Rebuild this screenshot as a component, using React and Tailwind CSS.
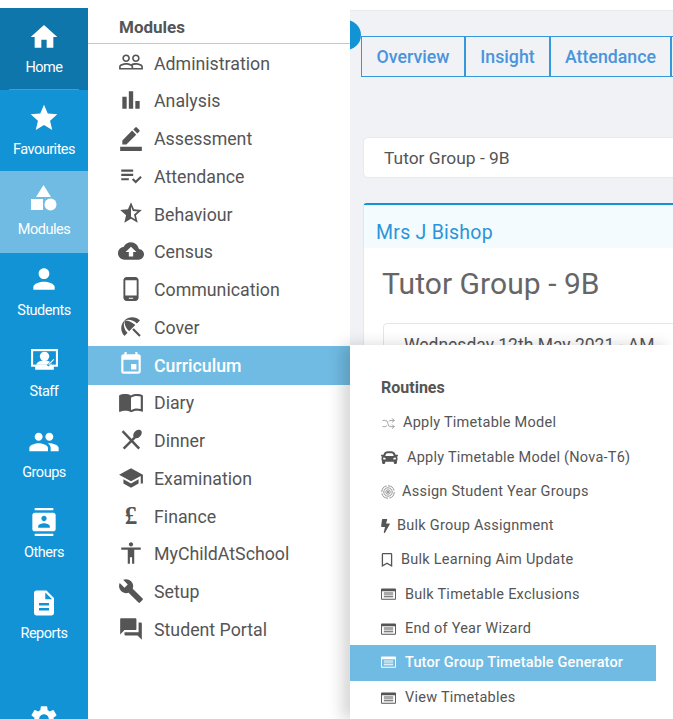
import React from "react";
import {
  MdHome, MdStar, MdPerson, MdPeople, MdContacts, MdDescription, MdSettings,
  MdPeopleOutline, MdBarChart, MdBorderColor, MdPlaylistAddCheck, MdOutlineStarHalf, MdCloudUpload,
  MdPhoneAndroid, MdBeachAccess, MdEvent, MdImportContacts, MdSchool, MdAccessibility,
  MdBuild, MdForum,
} from "react-icons/md";
import { FaCar, FaBolt, FaRegBookmark } from "react-icons/fa";
import { TbArrowsShuffle } from "react-icons/tb";

const font = { fontFamily: "Roboto, sans-serif" };

function ShapesIcon({ className }) {
  return (
    <svg viewBox="0 0 26 26" className={className} fill="currentColor">
      <path d="M12.5 0l7.5 12H5z" />
      <rect x="0" y="14" width="12" height="11" />
      <circle cx="19.5" cy="19.5" r="6" />
    </svg>
  );
}

function StaffIcon({ className }) {
  return (
    <svg viewBox="0 0 28 24" className={className} fill="none">
      <path d="M1 1h26v17h-4v3H5v-3H1z" fill="currentColor" />
      <rect x="3" y="3" width="22" height="13" fill="#1293d6" />
      <circle cx="14" cy="8" r="4.5" fill="currentColor" />
      <path d="M6 16c1-3 4-4 8-4s6 1 7 4z" fill="currentColor" />
      <path d="M17 17l6-6" stroke="#1293d6" strokeWidth="2" />
      <path d="M18 16l5-5" stroke="currentColor" strokeWidth="1" />
    </svg>
  );
}

function DinnerIcon({ className }) {
  return (
    <svg viewBox="0 0 24 24" className={className} fill="currentColor">
      <path d="M4.4 19.2L15 8.6l1.6 1.6L6 20.8z" />
      <ellipse cx="18" cy="6.4" rx="3.2" ry="4.6" transform="rotate(45 18 6.4)" />
      <path d="M3.4 4.6L5 3l15.4 16.2-1.7 1.6z" />
    </svg>
  );
}

function PoundIcon({ className }) {
  return (
    <span className={`${className} flex items-center justify-center font-bold text-[25px] leading-none`} style={{ fontFamily: '"Liberation Serif", serif' }}>
      £
    </span>
  );
}

function TableIcon({ className }) {
  return (
    <svg viewBox="0 0 16 12" className={className}>
      <path fillRule="evenodd" d="M1 0h14a1 1 0 0 1 1 1v10a1 1 0 0 1-1 1H1a1 1 0 0 1-1-1V1a1 1 0 0 1 1-1zM1 3v8h14V3z" fill="currentColor" />
      <path d="M3 4.4h10v1H3zM3 6.4h10v1H3zM3 8.4h10v1H3z" fill="currentColor" />
    </svg>
  );
}

function RadarIcon({ className }) {
  return (
    <svg viewBox="0 0 14 14" className={className} fill="none" stroke="currentColor" strokeWidth="0.9">
      <circle cx="7" cy="7" r="6.2" strokeDasharray="8 1.5" />
      <circle cx="7" cy="7" r="4.2" />
      <circle cx="7" cy="7" r="2.2" />
      <circle cx="7" cy="7" r="0.7" fill="currentColor" />
    </svg>
  );
}

function ShuffleIcon({ className }) {
  return <TbArrowsShuffle className={className} strokeWidth={1.2} />;
}

const rail = [
  { label: "Home", Icon: MdHome, cls: "w-[32px] h-[32px] mt-[13px]", bg: "bg-[#0f76ab]", h: "h-[82px]", gap: "mt-[6px]", rule: true },
  { label: "Favourites", Icon: MdStar, cls: "w-[32px] h-[32px] mt-[12px]", h: "h-[81px]", gap: "mt-[7px]" },
  { label: "Modules", Icon: ShapesIcon, cls: "w-[26px] h-[26px] mt-[14px]", bg: "bg-[#70bbe3]", h: "h-[82px]", gap: "mt-[10px]" },
  { label: "Students", Icon: MdPerson, cls: "w-[32px] h-[32px] mt-[10px]", h: "h-[81px]", gap: "mt-[7px]" },
  { label: "Staff", Icon: StaffIcon, cls: "w-[29px] h-[25px] mt-[14px]", h: "h-[81px]", gap: "mt-[10px]" },
  { label: "Groups", Icon: MdPeople, cls: "w-[32px] h-[32px] mt-[11px]", h: "h-[81px]", gap: "mt-[6px]" },
  { label: "Others", Icon: MdContacts, cls: "w-[28px] h-[30px] mt-[11px]", h: "h-[81px]", gap: "mt-[7px]" },
  { label: "Reports", Icon: MdDescription, cls: "w-[30px] h-[30px] mt-[11px]", h: "h-[81px]", gap: "mt-[7px]" },
];

const modules = [
  ["Administration", MdPeopleOutline],
  ["Analysis", MdBarChart],
  ["Assessment", MdBorderColor],
  ["Attendance", MdPlaylistAddCheck],
  ["Behaviour", MdOutlineStarHalf],
  ["Census", MdCloudUpload],
  ["Communication", MdPhoneAndroid],
  ["Cover", MdBeachAccess],
  ["Curriculum", MdEvent, true],
  ["Diary", MdImportContacts],
  ["Dinner", DinnerIcon],
  ["Examination", MdSchool],
  ["Finance", PoundIcon],
  ["MyChildAtSchool", MdAccessibility],
  ["Setup", MdBuild],
  ["Student Portal", MdForum],
];

const routines = [
  ["Apply Timetable Model", ShuffleIcon, "w-[15px] h-[15px] text-[#888]", "mr-[7px]"],
  ["Apply Timetable Model (Nova-T6)", FaCar, "w-[17px] h-[17px]", "mr-[9px]"],
  ["Assign Student Year Groups", RadarIcon, "w-[14px] h-[14px] text-[#888]", "mr-[7px]"],
  ["Bulk Group Assignment", FaBolt, "w-[9px] h-[14px]", "mr-[7px]"],
  ["Bulk Learning Aim Update", FaRegBookmark, "w-[12px] h-[14px]", "mr-[8px]"],
  ["Bulk Timetable Exclusions", TableIcon, "w-[15px] h-[12px]", "mr-[9px]"],
  ["End of Year Wizard", TableIcon, "w-[15px] h-[12px]", "mr-[9px]"],
  ["Tutor Group Timetable Generator", TableIcon, "w-[15px] h-[12px]", "mr-[9px]", true],
  ["View Timetables", TableIcon, "w-[15px] h-[12px]", "mr-[9px]"],
];

export default function App() {
  return (
    <div style={font} className="relative w-[673px] h-[719px] overflow-hidden bg-white flex">
      {/* icon rail */}
      <nav className="w-[88px] mt-[8px] bg-[#1293d6] text-white flex flex-col shrink-0 overflow-hidden">
        {rail.map(({ label, Icon, cls, bg, h, gap, rule }) => (
          <div key={label} className={`${h} ${bg || ""} flex flex-col items-center shrink-0`}>
            <Icon className={cls} />
            <span className={`${gap} text-[14.5px] leading-[18px] tracking-[-0.5px]`}>{label}</span>
            {rule && <span className="mt-auto w-[70px] h-px bg-[#3f9fd0]"></span>}
          </div>
        ))}
        <div className="flex justify-center mt-[45px] shrink-0">
          <MdSettings className="w-[32px] h-[32px]" />
        </div>
      </nav>

      {/* modules list */}
      <aside className="w-[262px] shrink-0 bg-white text-[#555] relative">
        <div className="h-[44px] pt-[16px] pl-[31px] border-b border-[#c4c6d0] font-bold text-[17px] leading-[22px]">
          Modules
        </div>
        <ul className="pt-[1px]">
          {modules.map(([label, Icon, active]) => (
            <li
              key={label}
              className={`pl-[31px] flex items-center text-[17.75px] ${active ? "-mt-[1.5px] pt-[1.5px] h-[39.25px] bg-[#70bbe3] text-white font-medium" : "h-[37.75px]"}`}
            >
              <span className="w-[24px] mr-[11px] flex justify-center -mt-[3px]">
                <Icon className="w-[26px] h-[26px] shrink-0" />
              </span>
              {label}
            </li>
          ))}
        </ul>
      </aside>

      {/* main */}
      <main className="relative flex-1 min-w-0 mt-[10px] bg-[#f0f2f6] border-t border-[#e8e9ed] overflow-hidden">
        <div className="absolute -left-[19px] top-[9px] w-[30px] h-[30px] rounded-full bg-[#1293d6]"></div>
        <div className="flex mt-[25px] ml-[11px] w-[400px] text-[17.75px] font-medium text-[#4a94dc]">
          <div className="w-[105px] h-[41px] pt-[1px] flex items-center justify-center border-[#3498db] border-t border-b border-l border-r-2">Overview</div>
          <div className="w-[85px] h-[41px] pt-[1px] flex items-center justify-center border-t border-b border-r-2 border-[#3498db]">Insight</div>
          <div className="w-[121px] h-[41px] pt-[1px] flex items-center justify-center border-t border-b border-r-2 border-[#3498db]">Attendance</div>
          <div className="w-[80px] h-[41px] border-t border-b border-[#3498db]"></div>
        </div>
        <div className="mt-[60px] ml-[13px] w-[400px] h-[41px] bg-white border border-[#e8e9ed] rounded-[5px] pl-[20px] pt-[1px] flex items-center text-[17.4px] text-[#555]">
          Tutor Group - 9B
        </div>
        <section className="mt-[25px] ml-[13px] w-[400px] h-[300px] bg-white border border-[#e4e6ea] border-t-2 border-t-[#1293d6] rounded-t-[4px]">
          <div className="h-[43px] bg-[#f3fbff] pl-[12px] pt-[12px] text-[19.5px] leading-[32px] text-[#2b94d8] tracking-[0.25px]">
            Mrs J Bishop
          </div>
          <h1 className="mt-[16px] ml-[18px] text-[30px] leading-[40px] text-[#666] tracking-[0.05px]">Tutor Group - 9B</h1>
          <div className="mt-[19px] ml-[19px] h-[60px] border border-[#e4e6ea] rounded-[4px] pl-[20px] pt-[9px] text-[17.5px] leading-[24px] text-[#555]">
            Wednesday 12th May 2021 - AM
          </div>
        </section>
      </main>

      {/* fly-out routines menu */}
      <div className="absolute left-[350px] top-[345px] w-[323px] h-[374px] bg-white text-[#555] shadow-[-8px_0_14px_rgba(0,0,0,0.16)]">
        <div className="pl-[31px] pt-[33px] font-bold text-[16px] leading-[19px]">Routines</div>
        <ul className="mt-[9px] w-[306px]">
          {routines.map(([label, Icon, cls, mr, active]) => (
            <li
              key={label}
              className={`pl-[31px] flex items-center text-[14.5px] ${active ? "-mt-[1px] pb-[1px] h-[36.25px] bg-[#70bbe3] text-white font-medium tracking-[0.15px]" : "h-[34.25px] tracking-[0.25px]"}`}
            >
              <Icon className={`${cls} ${mr} shrink-0`} />
              {label}
            </li>
          ))}
        </ul>
      </div>
    </div>
  );
}
